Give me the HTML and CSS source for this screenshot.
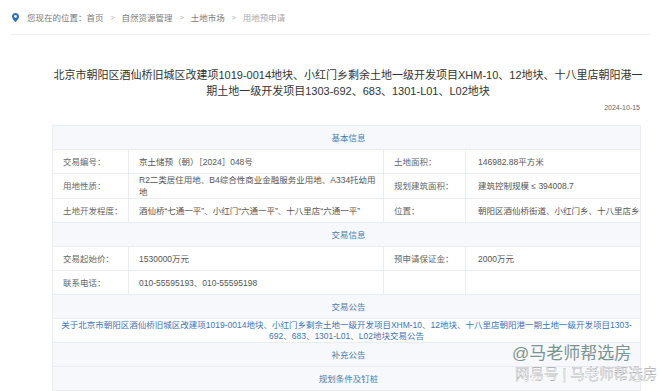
FILE: index.html
```html
<!DOCTYPE html>
<html lang="zh-CN">
<head>
<meta charset="utf-8">
<title>用地预申请</title>
<link rel="stylesheet" href="styles.css">
</head>
<body>
<div class="crumb">
  <svg class="pin" width="7" height="9" viewBox="0 0 7 9"><path d="M3.5 0C1.6 0 0 1.5 0 3.4 0 5.8 3.5 9 3.5 9S7 5.8 7 3.4C7 1.5 5.4 0 3.5 0z" fill="#2f6fb3"/><circle cx="3.5" cy="3.4" r="1.3" fill="#fff"/></svg>
  <span class="c-item">您现在的位置：首页</span><span class="sep">&gt;</span><span class="c-item">自然资源管理</span><span class="sep">&gt;</span><span class="c-item">土地市场</span><span class="sep">&gt;</span><span class="c-item c-cur">用地预申请</span>
</div>
<div class="main">
  <h1 class="title">北京市朝阳区酒仙桥旧城区改建项1019-0014地块、小红门乡剩余土地一级开发项目XHM-10、12地块、十八里店朝阳港一期土地一级开发项目1303-692、683、1301-L01、L02地块</h1>
  <div class="date">2024-10-15</div>
  <table class="info">
    <colgroup><col class="w1"><col class="w2"><col class="w3"><col class="w4"></colgroup>
    <tr class="sec"><td colspan="4">基本信息</td></tr>
    <tr><td class="lb">交易编号：</td><td class="val">京土储预（朝）［2024］048号</td><td class="lb">土地面积：</td><td class="val v4">146982.88平方米</td></tr>
    <tr><td class="lb">用地性质：</td><td class="val">R2二类居住用地、B4综合性商业金融服务业用地、A334托幼用地</td><td class="lb">规划建筑面积：</td><td class="val v4">建筑控制规模 ≤ 394008.7</td></tr>
    <tr><td class="lb">土地开发程度：</td><td class="val nw">酒仙桥“七通一平”、小红门“六通一平”、十八里店“六通一平”</td><td class="lb">位置：</td><td class="val v4 nw">朝阳区酒仙桥街道、小红门乡、十八里店乡</td></tr>
    <tr class="sec"><td colspan="4">交易信息</td></tr>
    <tr><td class="lb">交易起始价：</td><td class="val">1530000万元</td><td class="lb">预申请保证金：</td><td class="val v4">2000万元</td></tr>
    <tr><td class="lb">联系电话：</td><td class="val nw">010-55595193、010-55595198</td><td class="lb"></td><td class="val v4"></td></tr>
    <tr class="sec"><td colspan="4">交易公告</td></tr>
    <tr class="notice"><td colspan="4"><a class="link">关于北京市朝阳区酒仙桥旧城区改建项1019-0014地块、小红门乡剩余土地一级开发项目XHM-10、12地块、十八里店朝阳港一期土地一级开发项目1303-<wbr>692、683、1301-L01、L02地块交易公告</a></td></tr>
    <tr class="sec"><td colspan="4">补充公告</td></tr>
    <tr class="sec"><td colspan="4">规划条件及钉桩</td></tr>
  </table>
</div>
<div class="wm">
  <div class="wm1">@马老师帮选房</div>
  <div class="wm2">网易号 | 马老师帮选房</div>
</div>
</body>
</html>
```
FILE: styles.css
```css
html, body {
  margin: 0;
  padding: 0;
  background: #fff;
}
body {
  font-family: "Liberation Sans", "Noto Sans CJK SC", sans-serif;
  color: #555;
  position: relative;
  height: 391px;
  overflow: hidden;
}
.crumb {
  margin: 0 10px;
  padding-left: 2px;
  height: 34px;
  display: flex;
  align-items: center;
  border-bottom: 1px solid #f1f2f4;
  font-size: 8.5px;
  color: #7a7a7a;
}
.pin {
  margin-right: 8px;
  flex: none;
}
.sep {
  margin: 0 7px;
  color: #aaa;
  font-size: 7px;
}
.c-cur {
  color: #a9a9a9;
}
.main {
  margin-left: 52px;
  width: 588px;
}
.title {
  margin: 32px -8px 0 -4px;
  font-size: 11px;
  line-height: 16px;
  font-weight: normal;
  text-align: center;
  color: #333;
}
.date {
  margin-top: 4px;
  text-align: right;
  font-size: 7px;
  line-height: 10px;
  color: #666;
}
.info {
  margin-top: 12px;
  width: 588px;
  table-layout: fixed;
  border-collapse: collapse;
  font-size: 8.5px;
  line-height: 12px;
}
.w1 { width: 76px; }
.w2 { width: 255px; }
.w3 { width: 82px; }
.w4 { width: 175px; }
.info td {
  border: 1px solid #e9ecf0;
  height: 23px;
  padding: 0 6px 0 10px;
  vertical-align: middle;
}
.info .lb {
  color: #666;
  white-space: nowrap;
  padding-right: 0;
}
.info .val {
  color: #555;
}
.info .v4 {
  padding-left: 12px;
  padding-right: 0;
}
.nw {
  white-space: nowrap;
}
.sec td {
  background: #f6f8fb;
  text-align: center;
  color: #4a80ad;
}
.info .sec-last td {
  height: 24px;
}
.notice td {
  text-align: center;
  padding: 0 4px;
  line-height: 11px;
}
.link {
  color: #3b74b6;
  text-decoration: none;
}
.wm {
  position: absolute;
  left: 512px;
  top: 344px;
}
.wm1 {
  font-size: 17px;
  line-height: 20px;
  color: #7b948d;
}
.wm2 {
  margin-top: 2px;
  margin-left: 3px;
  font-size: 14.5px;
  line-height: 16px;
  color: #fbfbfb;
  -webkit-text-stroke: 0.25px #7a7a7a;
  white-space: nowrap;
}
```
